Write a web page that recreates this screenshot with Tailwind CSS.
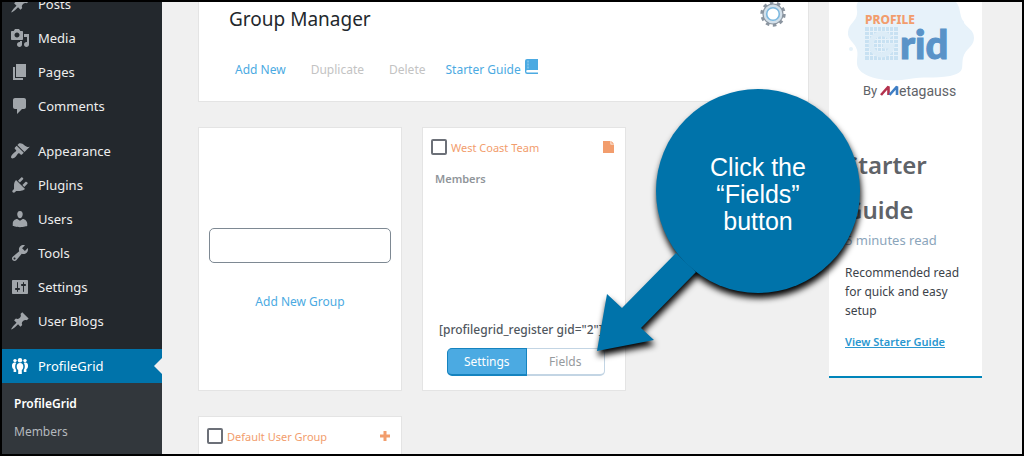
<!DOCTYPE html>
<html lang="en">
  <head>
    <meta charset="UTF-8" />
    <meta name="viewport" content="width=device-width, initial-scale=1.0" />
    <title>Group Manager</title>
    <script src="https://cdn.jsdelivr.net/npm/@tailwindcss/browser@4"></script>
  </head>

  <body class="relative flex h-screen overflow-hidden border-2 border-black bg-[#f0f0f0] font-['Noto_Sans',sans-serif] text-[13px]">
    <!-- Admin menu -->
    <nav class="w-40 shrink-0 bg-[#23282d] text-[#eeeeee]">
      <ul class="-mt-[15px]">
        <li>
          <a href="#" class="flex h-[34px] items-center gap-2 px-2">
            <svg class="size-5 fill-[#a0a5aa]" viewBox="0 0 20 20"><path d="M10.44 3.02l1.82-1.82 6.36 6.35-1.83 1.82c-1.05-.68-2.48-.57-3.41.36l-.75.75c-.92.93-1.04 2.35-.35 3.41l-1.83 1.82-2.41-2.41-2.8 2.79c-.42.42-3.38 2.71-3.8 2.29s1.86-3.39 2.28-3.81l2.79-2.79L4.1 9.36l1.83-1.82c1.05.69 2.48.57 3.4-.36l.75-.75c.93-.92 1.05-2.35.36-3.41z" /></svg>
            <span class="pt-0.5">Posts</span>
          </a>
        </li>
        <li>
          <a href="#" class="flex h-[34px] items-center gap-2 px-2">
            <svg class="size-5 fill-[#a0a5aa]" viewBox="0 0 20 20"><path d="M13 11V4c0-.55-.45-1-1-1h-1.67L9 1H5L3.67 3H2c-.55 0-1 .45-1 1v7c0 .55.45 1 1 1h10c.55 0 1-.45 1-1zM7 4.5c1.38 0 2.5 1.12 2.5 2.5S8.38 9.5 7 9.5 4.5 8.38 4.5 7 5.62 4.5 7 4.5zM14 6h5v10.5c0 1.38-1.12 2.5-2.5 2.5S14 17.88 14 16.5s1.12-2.5 2.5-2.5c.17 0 .34.02.5.05V9h-3V6zm-4 8.05V13h2v3.5c0 1.38-1.12 2.5-2.5 2.5S7 17.88 7 16.5 8.12 14 9.5 14c.17 0 .34.02.5.05z" /></svg>
            <span class="pt-0.5">Media</span>
          </a>
        </li>
        <li>
          <a href="#" class="flex h-[34px] items-center gap-2 px-2">
            <svg class="size-5 fill-[#a0a5aa]" viewBox="0 0 20 20"><path d="M6 15V2h10v13H6zm-1 1h8v2H3V5h2v11z" /></svg>
            <span class="pt-0.5">Pages</span>
          </a>
        </li>
        <li>
          <a href="#" class="flex h-[34px] items-center gap-2 px-2">
            <svg class="size-5 fill-[#a0a5aa]" viewBox="0 0 20 20"><path d="M5 2h9c1.1 0 2 .9 2 2v7c0 1.1-.9 2-2 2h-2l-5 5v-5H5c-1.1 0-2-.9-2-2V4c0-1.1.9-2 2-2z" /></svg>
            <span class="pt-0.5">Comments</span>
          </a>
        </li>
        <li class="mt-[11px]">
          <a href="#" class="flex h-[34px] items-center gap-2 px-2">
            <svg class="size-5 fill-[#a0a5aa]" viewBox="0 0 20 20"><path d="M14.48 11.06L7.41 3.99l1.5-1.5c.5-.56 2.3-.47 3.51.32 1.21.8 1.43 1.28 2.91 2.1 1.18.64 2.45 1.26 4.45.85zm-.71.71L6.7 4.7 4.93 6.47c-.39.39-.39 1.02 0 1.41l1.06 1.06c.39.39.39 1.03 0 1.42-.6.6-1.43 1.11-2.21 1.69-.35.26-.7.53-1.01.84C1.43 14.23.4 16.08 1.4 17.07c.99 1 2.84-.03 4.18-1.36.31-.31.58-.66.85-1.02.57-.78 1.08-1.61 1.69-2.21.39-.39 1.02-.39 1.41 0l1.06 1.06c.39.39 1.02.39 1.41 0z" /></svg>
            <span class="pt-0.5">Appearance</span>
          </a>
        </li>
        <li>
          <a href="#" class="flex h-[34px] items-center gap-2 px-2">
            <svg class="size-5 fill-[#a0a5aa]" viewBox="0 0 20 20"><path d="M13.11 4.36L9.87 7.6 8 5.73l3.24-3.24c.35-.34 1.05-.2 1.56.32.52.51.66 1.21.31 1.55zm-8 1.77l.91-1.12 9.01 9.01-1.19.84c-.71.71-2.63 1.16-3.82 1.16H6.14L4.9 17.26c-.59.59-1.54.59-2.12 0-.59-.58-.59-1.53 0-2.12l1.24-1.24v-3.88c0-1.13.4-3.19 1.09-3.89zm7.26 3.97l3.24-3.24c.34-.35 1.04-.21 1.55.31.52.51.66 1.21.31 1.55l-3.24 3.25z" /></svg>
            <span class="pt-0.5">Plugins</span>
          </a>
        </li>
        <li>
          <a href="#" class="flex h-[34px] items-center gap-2 px-2">
            <svg class="size-5 fill-[#a0a5aa]" viewBox="0 0 20 20"><path d="M10 9.25c-2.27 0-2.73-3.44-2.73-3.44C7 4.02 7.82 2 9.97 2c2.16 0 2.98 2.02 2.71 3.81 0 0-.41 3.44-2.68 3.44zm0 2.57L12.72 10c2.39 0 4.52 2.33 4.52 4.53v2.49s-3.65 1.13-7.24 1.13c-3.65 0-7.24-1.13-7.24-1.13v-2.49c0-2.25 1.94-4.48 4.47-4.48z" /></svg>
            <span class="pt-0.5">Users</span>
          </a>
        </li>
        <li>
          <a href="#" class="flex h-[34px] items-center gap-2 px-2">
            <svg class="size-5 fill-[#a0a5aa]" viewBox="0 0 20 20"><path d="M16.68 9.77c-1.34 1.34-3.3 1.67-4.95.99l-5.41 6.52c-.99.99-2.59.99-3.58 0s-.99-2.59 0-3.57l6.52-5.42c-.68-1.65-.35-3.61.99-4.95 1.28-1.28 3.12-1.62 4.72-1.06l-2.89 2.89 2.82 2.82 2.86-2.87c.53 1.58.18 3.39-1.08 4.65zM3.81 16.21c.4.39 1.04.39 1.43 0 .4-.4.4-1.04 0-1.43-.39-.4-1.03-.4-1.43 0-.39.39-.39 1.03 0 1.43z" /></svg>
            <span class="pt-0.5">Tools</span>
          </a>
        </li>
        <li>
          <a href="#" class="flex h-[34px] items-center gap-2 px-2">
            <svg class="size-5 fill-[#a0a5aa]" viewBox="0 0 20 20"><path d="M18 16V4c0-.55-.45-1-1-1H3c-.55 0-1 .45-1 1v12c0 .55.45 1 1 1h14c.55 0 1-.45 1-1zM8 11h1c.55 0 1 .45 1 1s-.45 1-1 1H8v1.5c0 .28-.22.5-.5.5s-.5-.22-.5-.5V13H6c-.55 0-1-.45-1-1s.45-1 1-1h1V5.5c0-.28.22-.5.5-.5s.5.22.5.5V11zm5-2h-1c-.55 0-1-.45-1-1s.45-1 1-1h1V5.5c0-.28.22-.5.5-.5s.5.22.5.5V7h1c.55 0 1 .45 1 1s-.45 1-1 1h-1v5.5c0 .28-.22.5-.5.5s-.5-.22-.5-.5V9z" /></svg>
            <span class="pt-0.5">Settings</span>
          </a>
        </li>
        <li>
          <a href="#" class="flex h-[34px] items-center gap-2 px-2">
            <svg class="size-5 fill-[#a0a5aa]" viewBox="0 0 20 20"><path d="M10.44 3.02l1.82-1.82 6.36 6.35-1.83 1.82c-1.05-.68-2.48-.57-3.41.36l-.75.75c-.92.93-1.04 2.35-.35 3.41l-1.83 1.82-2.41-2.41-2.8 2.79c-.42.42-3.38 2.71-3.8 2.29s1.86-3.39 2.28-3.81l2.79-2.79L4.1 9.36l1.83-1.82c1.05.69 2.48.57 3.4-.36l.75-.75c.93-.92 1.05-2.35.36-3.41z" /></svg>
            <span class="pt-0.5">User Blogs</span>
          </a>
        </li>
        <li class="mt-[11px]">
          <a href="#" class="flex h-[34px] items-center gap-2 bg-[#0073aa] pl-2 text-white">
            <svg class="size-5 fill-white" viewBox="0 0 20 20">
              <circle cx="5" cy="4.600" r="1.700" />
              <circle cx="10" cy="4.200" r="2.200" />
              <circle cx="15" cy="4.600" r="1.700" />
              <path d="M3.600 6.800C2.400 7.200 1.900 8.600 2 10.200c.1 1.500.8 2.500 1.600 3V16h2.600v-2.200C5 12.600 4.700 8.800 6.200 6.900c-.8-.3-1.800-.4-2.600-.1zM16.400 6.800c1.200.4 1.700 1.800 1.600 3.400-.1 1.500-.8 2.500-1.600 3V16h-2.600v-2.200c1.200-1.200 1.500-5 0-6.900.8-.3 1.800-.4 2.600-.1z" />
              <path d="M10 7c-2.300 0-3.300 1.500-3.300 3.500 0 1.800.7 3 1.500 3.600V18h3.600v-3.900c.8-.6 1.500-1.800 1.500-3.600C13.300 8.500 12.300 7 10 7z" />
            </svg>
            <span class="flex-1 pt-0.5">ProfileGrid</span>
            <svg class="h-4 w-2 fill-[#f0f0f0]" viewBox="0 0 8 16"><path d="M8 0v16L0 8z" /></svg>
          </a>
          <ul class="h-24 bg-[#32373c] px-3 pt-[7px] text-xs">
            <li><a href="#" class="block leading-7 font-semibold text-white">ProfileGrid</a></li>
            <li><a href="#" class="block leading-7 text-[#b4b9be]">Members</a></li>
          </ul>
        </li>
      </ul>
    </nav>

    <div class="flex flex-1 items-start gap-5 pr-10 pl-9">
      <main class="flex-1">
        <header class="h-[100px] border border-t-0 border-[#e4e4e4] bg-white pr-[22px] pl-[30px]">
          <div class="flex items-start justify-between">
            <h1 class="pt-[3px] text-[19px] leading-7 text-[#23282d]">Group Manager</h1>
            <button type="button" aria-label="Group options">
              <svg class="size-[26px]" viewBox="0 0 26 26">
                <circle cx="13" cy="12" r="11" fill="none" stroke="#8b95a0" stroke-width="3.400" stroke-dasharray="3.500 3.412" />
                <circle cx="13" cy="12" r="10" fill="#d3e0ea" stroke="#8b95a0" stroke-width="1.200" />
                <circle cx="13" cy="12" r="6.300" fill="#fff" stroke="#7cb8df" stroke-width="1.600" />
              </svg>
            </button>
          </div>
          <div class="flex items-center pt-[26px] pl-1.5 text-xs text-[#4baae2]">
            <a href="#" class="mr-[25px]">Add New</a>
            <button type="button" class="mr-[25px] text-[#c3c3c3]" disabled>Duplicate</button>
            <button type="button" class="mr-5 text-[#c3c3c3]" disabled>Delete</button>
            <a href="#" class="flex items-center gap-1">
              Starter Guide
              <svg class="mb-1.5 h-[15px] w-[13px]" viewBox="0 0 13 15">
                <path d="M2 0H13V11H2.500a1.300 1.300 0 0 0 0 2.600H13V15H2.200A2.200 2.200 0 0 1 0 12.800V2A2 2 0 0 1 2 0z" fill="#4baae2" />
                <path d="M3 1.500V10" stroke="#a5d5f1" stroke-width="1" stroke-dasharray="2 1" />
              </svg>
            </a>
          </div>
        </header>

        <div class="mt-[25px] flex flex-wrap gap-x-5 gap-y-[25px] text-xs">
          <form class="flex h-[264px] w-51 flex-col items-center border border-[#e4e4e4] bg-white px-2.5 pt-[100px]">
            <input type="text" aria-label="Group name" class="h-[35px] w-full rounded-[5px] border border-[#7e8993] px-2" />
            <button type="submit" class="mt-[31px] text-[#4baae2]">Add New Group</button>
          </form>

          <section class="flex h-[264px] w-51 flex-col border border-[#e4e4e4] bg-white px-2 pt-[11px]">
            <div class="flex items-center justify-between pr-[3px] text-[#f29d6d]">
              <label class="flex items-center gap-1 text-[11px]">
                <input type="checkbox" class="size-4 appearance-none rounded-xs border-2 border-[#6c7078] bg-white" />
                <span class="pt-0.5">West Coast Team</span>
              </label>
              <svg class="h-3 w-[11px] fill-[#f29d6d]" viewBox="0 0 11 12"><path d="M0 0h7.500v3.500H11V12H0zM8.300 0L11 2.700H8.300z" /></svg>
            </div>
            <h2 class="mt-4 pl-1 text-[11px] font-semibold text-[#90959a]">Members</h2>
            <p class="mt-auto pl-2 font-medium whitespace-nowrap text-[#50575e]">[profilegrid_register gid="2"]</p>
            <div class="mt-2.5 mb-3.5 flex pr-3 pl-4">
              <button type="button" class="h-7 flex-1 rounded-l-[5px] border border-b-2 border-[#1583bf] bg-[#4baae2] text-white">Settings</button>
              <button type="button" class="h-7 flex-1 rounded-r-[5px] border border-b-2 border-l-0 border-[#c3d5e4] bg-white text-[#969a9e]">Fields</button>
            </div>
          </section>

          <section class="h-[264px] w-51 border border-[#e4e4e4] bg-white px-2 pt-[11px]">
            <div class="flex items-center justify-between pr-[3px] text-[#f29d6d]">
              <label class="flex items-center gap-1 text-[11px]">
                <input type="checkbox" class="size-4 appearance-none rounded-xs border-2 border-[#6c7078] bg-white" />
                <span class="pt-0.5">Default User Group</span>
              </label>
              <svg class="size-2.5 fill-[#f29d6d]" viewBox="0 0 10 10"><path d="M3.500 0h3v3.500H10v3H6.500V10h-3V6.500H0v-3h3.500z" /></svg>
            </div>
          </section>
        </div>
      </main>

      <aside class="w-[153px] border-b-2 border-[#0085ba] bg-white pb-6">
        <svg class="h-[100px] w-full" viewBox="0 0 153 100">
          <path d="M29 0H127C132 6 130 12 134 19C138 27 145 27 145 36C145 45 136 46 134 56C132 66 137 70 121 74C105 77 94 74 80 77C64 80 44 78 34 71C24 64 30 56 28 48C26 40 18 38 19 30C20 21 27 20 28 12C29 8 26 4 29 0z" fill="#e7f2fa" />
          <circle cx="22" cy="47" r="2" fill="#e7f2fa" />
          <circle cx="132" cy="21" r="3" fill="#e7f2fa" />
          <rect x="36" y="25" width="33" height="33" fill="#c8e1f2" />
          <path d="M36 29.500H69M36 33.500H69M36 37.500H69M36 41.500H69M36 45.500H69M36 49.500H69M36 53.500H69M40.500 25V58M44.500 25V58M48.500 25V58M52.500 25V58M56.500 25V58M60.500 25V58M64.500 25V58" stroke="#e7f2fa" />
          <path d="M61 36A10.500 10.500 0 1 0 63 44H54" fill="none" stroke="#dcecf7" stroke-width="5" />
          <text x="36" y="22" fill="#f29d6d" font-family="Noto Sans" font-size="12" font-weight="800">PROFILE</text>
          <text x="71" y="57" fill="#5a93c8" stroke="#5a93c8" font-family="Lato" font-size="40" font-weight="900">rid</text>
          <text x="34" y="93" fill="#5f6368" font-family="Roboto" font-size="13">By</text>
          <path d="M52 93L59.500 84.500V93" fill="none" stroke="#b4324e" stroke-width="2.600" stroke-linejoin="bevel" />
          <path d="M60.500 93L68 84.500V93" fill="none" stroke="#3f7ec4" stroke-width="2.600" stroke-linejoin="bevel" />
          <text x="70" y="94" fill="#5f6368" font-family="Roboto" font-size="14">etagauss</text>
        </svg>
        <div class="px-4 pt-10">
          <h2 class="text-2xl leading-[45px] font-semibold text-[#5f6368]">Starter Guide</h2>
          <p class="leading-4 text-[#8ba5bb]">5 minutes read</p>
          <p class="mt-[15px] text-xs leading-[19px] text-[#3c434a]">Recommended read for quick and easy setup</p>
          <a href="#" class="mt-3 block text-[11px] leading-5 font-semibold whitespace-nowrap text-[#2a97d0] underline">View Starter Guide</a>
        </div>
      </aside>
    </div>

    <!-- Callout -->
    <div class="absolute top-[85px] left-[590px] h-[280px] w-[276px]">
      <svg class="size-full overflow-visible drop-shadow-[1px_5px_3px_#000000]" viewBox="0 0 276 280">
        <path d="M84 166L30 221L15 207L5 264L62 253L49 241L104 185z" fill="#0073aa" />
        <circle cx="166" cy="104" r="102" fill="#0073aa" />
      </svg>
      <p class="absolute top-[67px] left-[106px] w-30 text-center font-['Liberation_Sans',sans-serif] text-[25px] leading-[27px] text-white">
        Click the “Fields” button
      </p>
    </div>
  </body>
</html>
